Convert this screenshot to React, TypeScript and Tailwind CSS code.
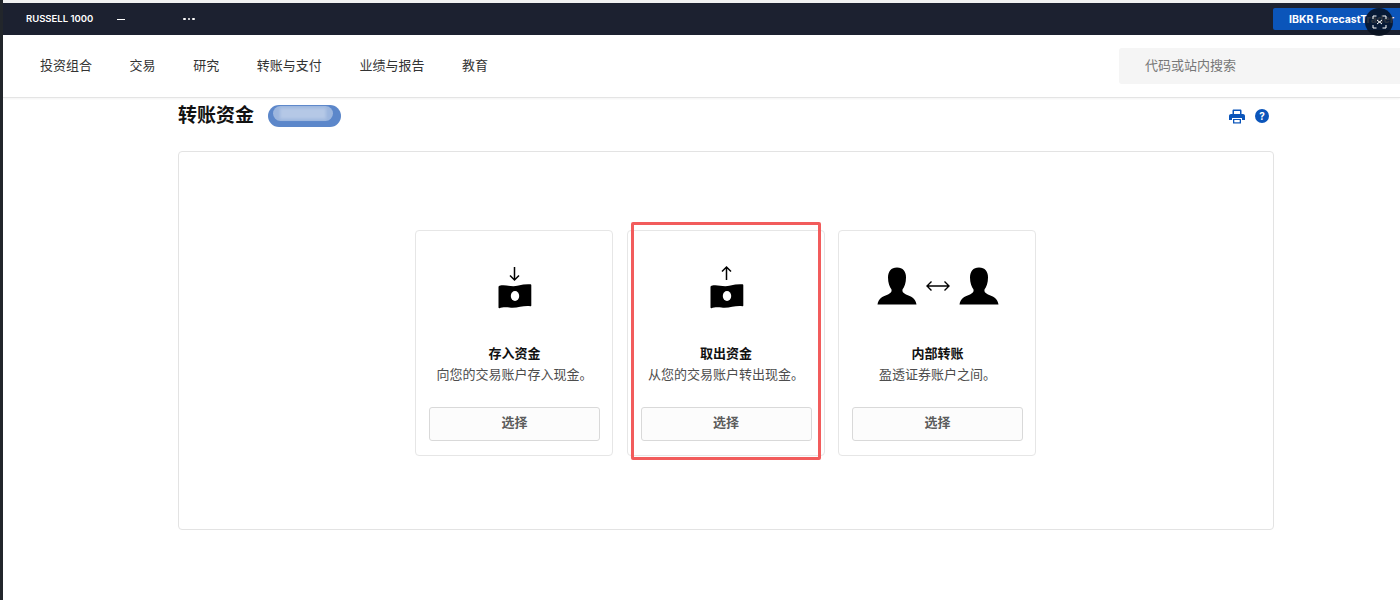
import React from "react";

const cjk = "font-['Inter','Noto_Sans_CJK_SC',sans-serif]";

function Money({ up }: { up: boolean }) {
  return (
    <svg width="37" height="46" viewBox="0.500 0 37 46" className="block">
      <path
        d={up ? "M19 16V3M14.5 7.5L19 3L23.5 7.5" : "M19 3V16M14.5 11.5L19 16L23.5 11.5"}
        fill="none"
        stroke="#000"
        strokeWidth="1.5"
      />
      <path
        d="M3 23C3 22.500 3.500 22 4 21.800C10 20 15 23.500 23 21.500C27 20.500 31 20 35 20.300C35.500 20.400 35.800 20.700 35.800 21.200L35.800 41.500C35.800 42 35.500 42.300 35 42.200C28 41 22 44.500 14 43.500C9 43 6 43.500 4 44.300C3.500 44.500 3 44 3 43.500Z"
        fill="#000"
      />
      <ellipse cx="19.500" cy="32" rx="4.200" ry="5" fill="#fff" />
    </svg>
  );
}

function Person() {
  return (
    <svg width="40" height="38" viewBox="0 0 40 38" className="block">
      <path
        d="M20 0.500C26 0.500 29 4.500 29 10.500C29 16 27.500 19.500 25.500 22.500C25 24.500 26 26 29 27.500C34 29.500 38.500 31 39.500 37.500H0.500C1.500 31 6 29.500 11 27.500C14 26 15 24.500 14.500 22.500C12.500 19.500 11 16 11 10.500C11 4.500 14 0.500 20 0.500Z"
        fill="#000"
      />
    </svg>
  );
}

function Card({
  title,
  desc,
  children,
  wide,
}: {
  title: string;
  desc: string;
  children: React.ReactNode;
  wide?: boolean;
}) {
  return (
    <div className="flex h-[226px] w-[198px] flex-col items-center rounded-[4px] border border-[#e6e6e6] bg-white pr-[12px] pl-[13px]">
      <div className={`flex h-[113px] w-full items-end justify-center ${wide ? "pb-[39px]" : "pb-[34px]"}`}>
        {children}
      </div>
      <div className="text-[13px] leading-[18px] font-bold text-[#111]">{title}</div>
      <div className="mt-[3px] text-[13px] leading-[18px] whitespace-nowrap text-[#4d4d4d]">{desc}</div>
      <button className="mt-[24px] h-[34px] w-full rounded-[3px] border border-[#d9d9d9] bg-[#fcfcfc] pb-[2px] text-[13px] font-semibold text-[#5c5c5c]">
        选择
      </button>
    </div>
  );
}

export default function App() {
  return (
    <div className={`relative flex h-[600px] w-[1400px] overflow-hidden bg-white ${cjk}`}>
      <div className="w-[3px] shrink-0 bg-[#22262b]" />
      <div className="flex min-w-0 flex-1 flex-col">
        <div className="h-[3px] bg-[#f1f1f1]" />
        <header className="flex h-[32px] items-center justify-between bg-[#1c2130]">
          <div className="flex items-center pl-[23px] text-white">
            <span className="pt-[1px] text-[9.5px] font-semibold">RUSSELL 1000</span>
            <span className="ml-[24px] h-[1px] w-[8px] bg-white" />
            <span className="ml-[58px] flex gap-[2px]">
              <i className="h-[2.5px] w-[2.5px] rounded-full bg-white" />
              <i className="h-[2.5px] w-[2.5px] rounded-full bg-white" />
              <i className="h-[2.5px] w-[2.5px] rounded-full bg-white" />
            </span>
          </div>
          <div className="flex h-[22px] w-[127px] items-center rounded-l-[2px] bg-[#0b55ba] pl-[16px] pt-[1px] text-[10.5px] font-bold whitespace-nowrap text-white">
            IBKR ForecastTrader
          </div>
        </header>
        <nav className="flex h-[63px] items-center justify-between border-b border-[#e4e4e4] bg-white shadow-[0_1px_2px_rgba(0,0,0,0.05)]">
          <ul className="flex gap-[37.6px] pl-[37px] text-[13px] text-[#333]">
            <li>投资组合</li>
            <li>交易</li>
            <li>研究</li>
            <li>转账与支付</li>
            <li>业绩与报告</li>
            <li>教育</li>
          </ul>
          <div className="flex h-[36px] w-[281px] items-center rounded-l-[3px] bg-[#f5f5f5] pl-[26px] text-[13px] text-[#777]">
            代码或站内搜索
          </div>
        </nav>
        <main className="ml-[175px] w-[1096px]">
          <div className="flex h-[53px] items-center justify-between pb-[20px] pt-[3px]">
            <div className="flex items-center">
              <h1 className="text-[19px] leading-[26px] font-bold text-[#111]">转账资金</h1>
              <div className="ml-[14px] h-[22px] w-[73px] overflow-hidden rounded-full bg-[#5c87ca] blur-[0.6px]">
                <div className="mt-[1px] ml-[5px] flex h-[15px] w-[60px] items-center justify-center rounded-full bg-[#9cb6de]">
                  <div className="h-[11px] w-[46px] bg-[#b5c8e6] blur-[1.5px]" />
                </div>
              </div>
            </div>
            <div className="flex items-center gap-[10px] pr-[5px]">
              <svg width="16" height="15" viewBox="0 0 16 15" className="block">
                <path
                  d="M3.500 5V1.800C3.500 1 4 .5 4.800 .5H11.200C12 .5 12.500 1 12.500 1.800V5H11V2H5V5ZM2 5H14C15.100 5 16 5.900 16 7V11H13V9H3V11H0V7C0 5.900 .9 5 2 5ZM4 10H12V14.500H4Z"
                  fill="#0b55ba"
                />
                <rect x="5.300" y="11" width="5.400" height="2.300" fill="#fff" />
              </svg>
              <span className="flex h-[14px] w-[14px] items-center justify-center rounded-full bg-[#0b55ba] text-[10px] leading-none font-bold text-white">
                ?
              </span>
            </div>
          </div>
          <section className="flex h-[379px] items-center justify-center gap-[13.5px] rounded-[4px] border border-[#e3e3e3] pt-[5px] pr-[1px]">
            <Card title="存入资金" desc="向您的交易账户存入现金。">
              <Money up={false} />
            </Card>
            <Card title="取出资金" desc="从您的交易账户转出现金。">
              <Money up />
            </Card>
            <Card title="内部转账" desc="盈透证券账户之间。" wide>
              <div className="flex items-center gap-[9px]">
                <Person />
                <svg width="24" height="12" viewBox="0 0 24 12" className="block">
                  <path d="M1 6H23M5.500 1.500L1 6L5.500 10.500M18.500 1.500L23 6L18.500 10.500" fill="none" stroke="#000" strokeWidth="1.400" />
                </svg>
                <Person />
              </div>
            </Card>
          </section>
        </main>
      </div>

      <div className="absolute top-[222px] left-[631px] h-[238px] w-[190px] rounded-[2px] border-[3.500px] border-[#f25c5c]" />

      <div className="absolute top-[8px] left-[1365px] flex h-[28px] w-[28px] items-center justify-center rounded-full bg-[#07101f]/85">
        <svg width="15" height="14" viewBox="0 0 15 14" className="block" fill="none" stroke="#fff" strokeWidth="1">
          <path d="M1 4V1H4.500M10.500 1H14V4M14 10V13H10.500M4.500 13H1V10M5 5L10 9M10 5L5 9" />
        </svg>
      </div>
    </div>
  );
}
